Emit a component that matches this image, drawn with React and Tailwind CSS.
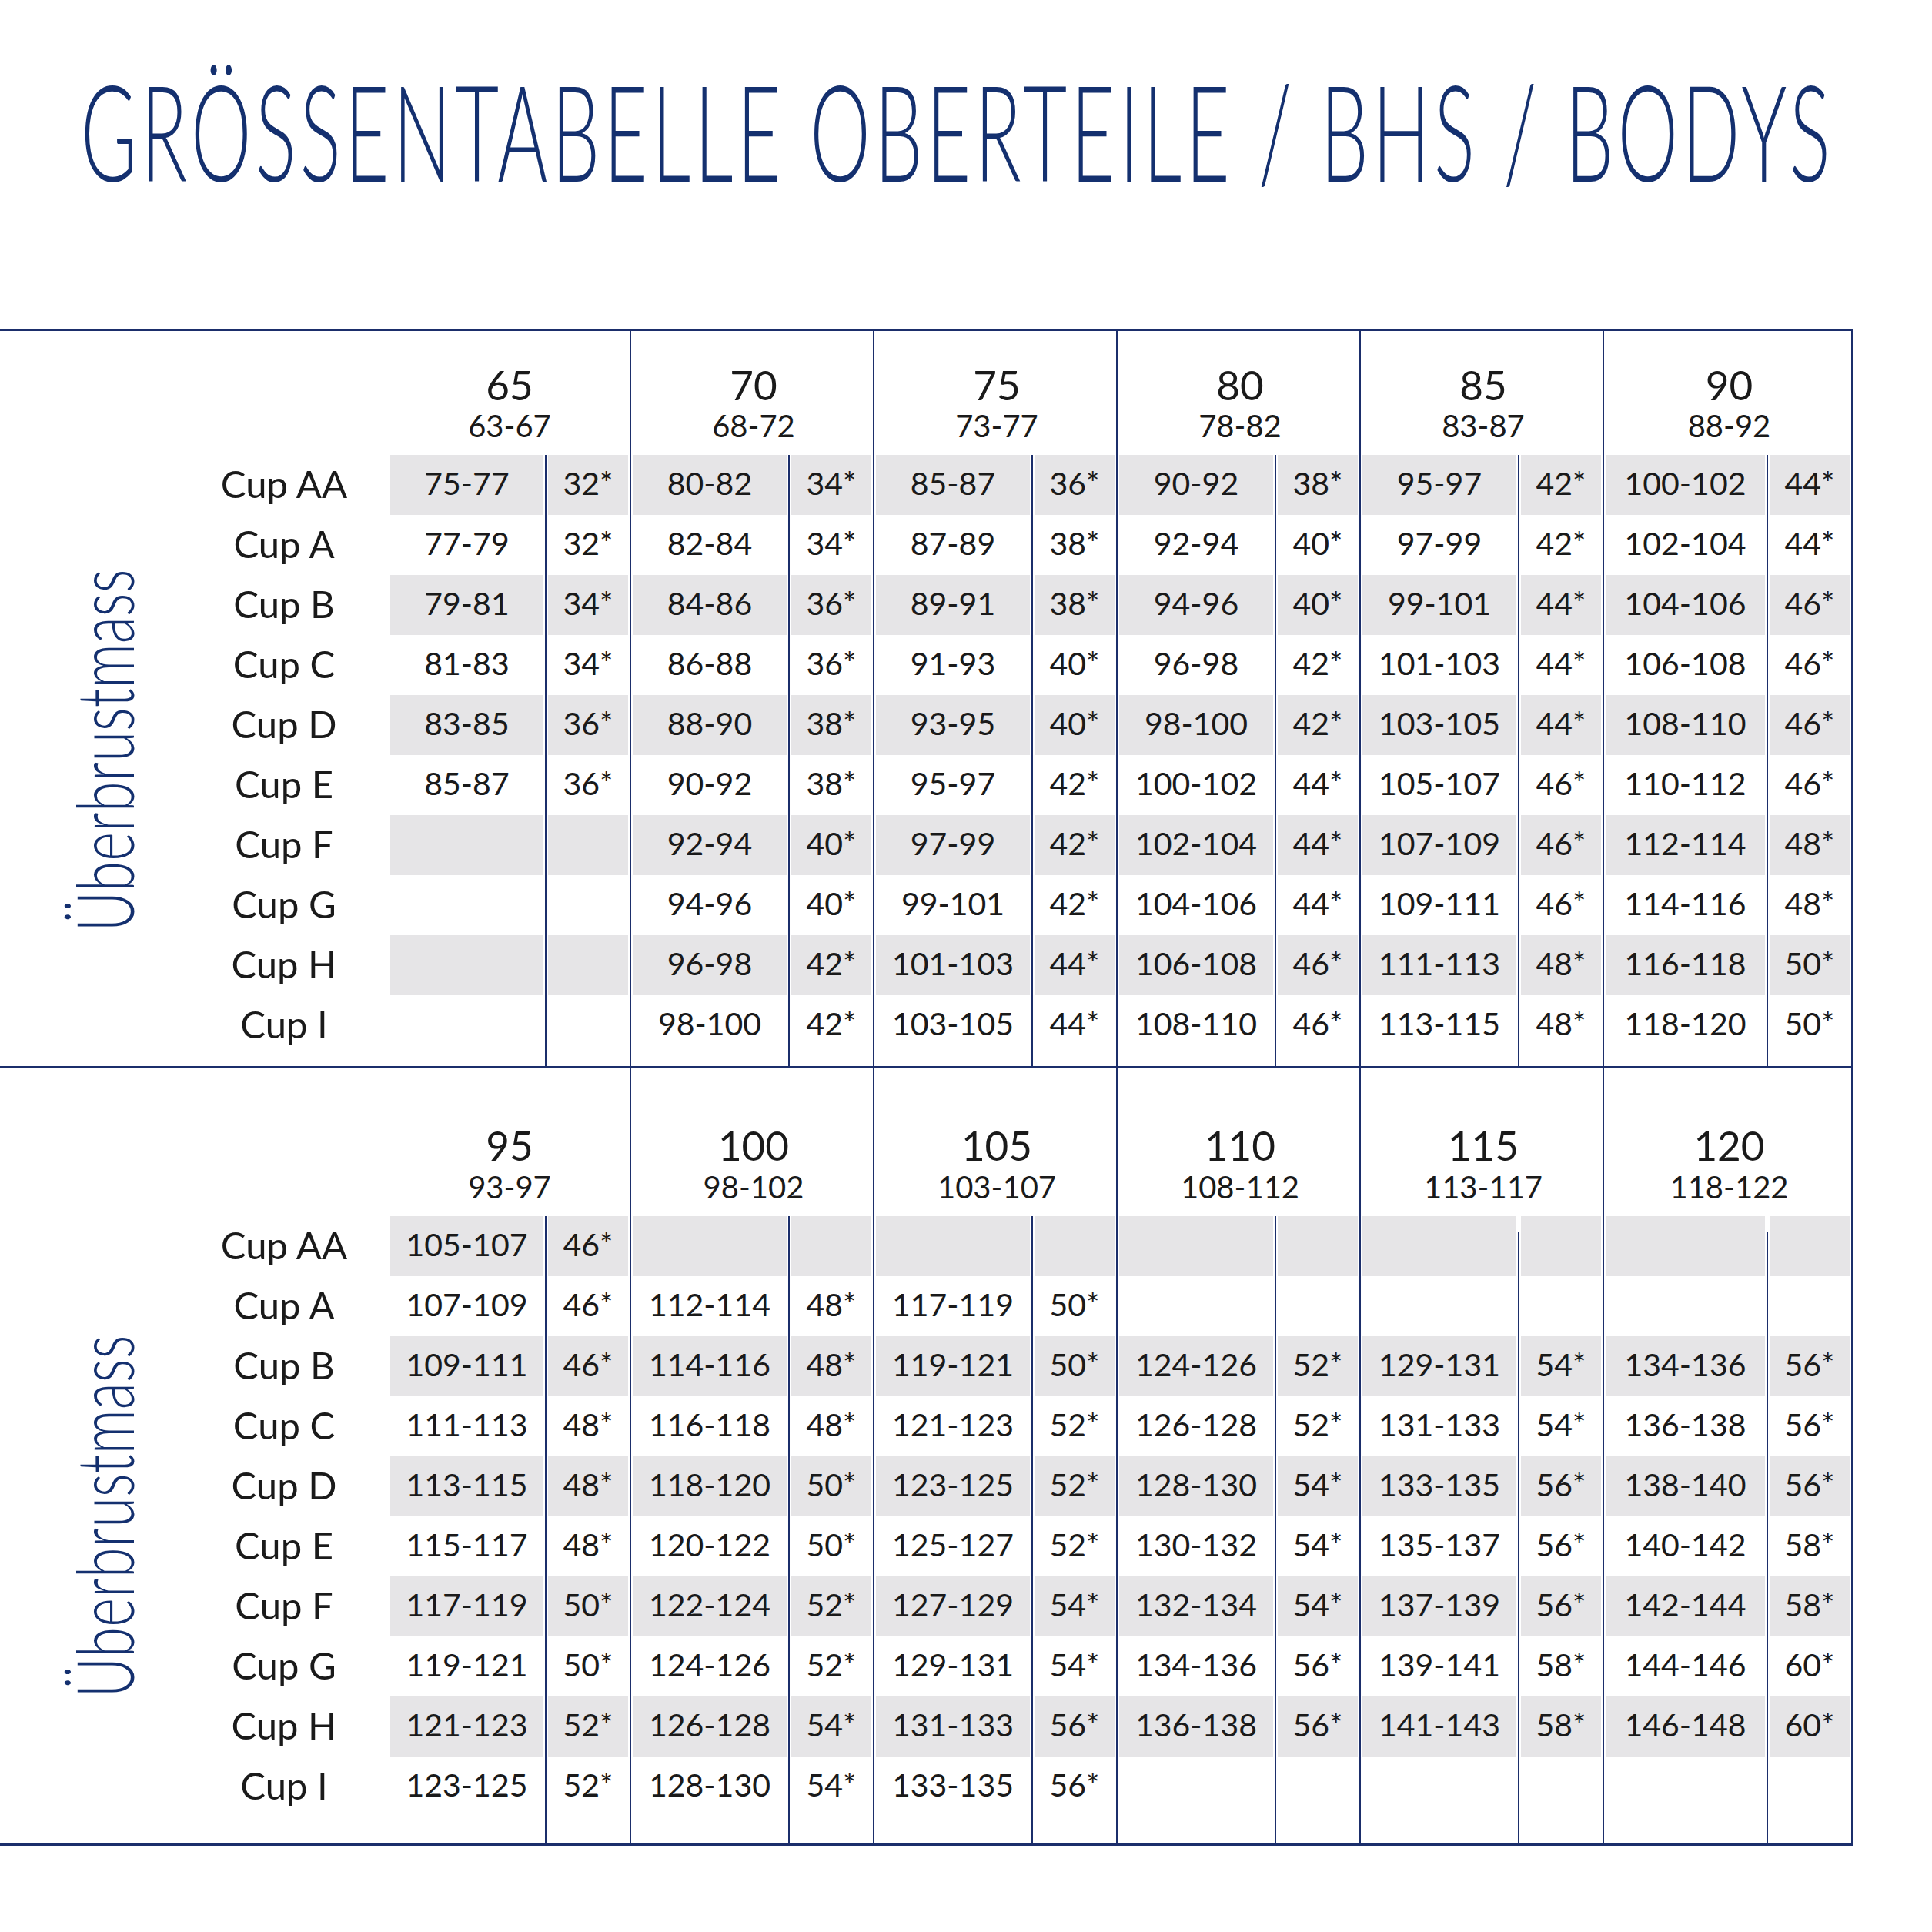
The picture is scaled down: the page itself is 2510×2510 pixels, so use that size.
import React from 'react';

const cups = ['Cup AA', 'Cup A', 'Cup B', 'Cup C', 'Cup D', 'Cup E', 'Cup F', 'Cup G', 'Cup H', 'Cup I'];

// rows: [range, size] or null for an empty cell
const upper = [
  { size: '65', range: '63-67', rows: [['75-77', '32*'], ['77-79', '32*'], ['79-81', '34*'], ['81-83', '34*'], ['83-85', '36*'], ['85-87', '36*'], null, null, null, null] },
  { size: '70', range: '68-72', rows: [['80-82', '34*'], ['82-84', '34*'], ['84-86', '36*'], ['86-88', '36*'], ['88-90', '38*'], ['90-92', '38*'], ['92-94', '40*'], ['94-96', '40*'], ['96-98', '42*'], ['98-100', '42*']] },
  { size: '75', range: '73-77', rows: [['85-87', '36*'], ['87-89', '38*'], ['89-91', '38*'], ['91-93', '40*'], ['93-95', '40*'], ['95-97', '42*'], ['97-99', '42*'], ['99-101', '42*'], ['101-103', '44*'], ['103-105', '44*']] },
  { size: '80', range: '78-82', rows: [['90-92', '38*'], ['92-94', '40*'], ['94-96', '40*'], ['96-98', '42*'], ['98-100', '42*'], ['100-102', '44*'], ['102-104', '44*'], ['104-106', '44*'], ['106-108', '46*'], ['108-110', '46*']] },
  { size: '85', range: '83-87', rows: [['95-97', '42*'], ['97-99', '42*'], ['99-101', '44*'], ['101-103', '44*'], ['103-105', '44*'], ['105-107', '46*'], ['107-109', '46*'], ['109-111', '46*'], ['111-113', '48*'], ['113-115', '48*']] },
  { size: '90', range: '88-92', rows: [['100-102', '44*'], ['102-104', '44*'], ['104-106', '46*'], ['106-108', '46*'], ['108-110', '46*'], ['110-112', '46*'], ['112-114', '48*'], ['114-116', '48*'], ['116-118', '50*'], ['118-120', '50*']] },
];

const lower = [
  { size: '95', range: '93-97', rows: [['105-107', '46*'], ['107-109', '46*'], ['109-111', '46*'], ['111-113', '48*'], ['113-115', '48*'], ['115-117', '48*'], ['117-119', '50*'], ['119-121', '50*'], ['121-123', '52*'], ['123-125', '52*']] },
  { size: '100', range: '98-102', rows: [null, ['112-114', '48*'], ['114-116', '48*'], ['116-118', '48*'], ['118-120', '50*'], ['120-122', '50*'], ['122-124', '52*'], ['124-126', '52*'], ['126-128', '54*'], ['128-130', '54*']] },
  { size: '105', range: '103-107', rows: [null, ['117-119', '50*'], ['119-121', '50*'], ['121-123', '52*'], ['123-125', '52*'], ['125-127', '52*'], ['127-129', '54*'], ['129-131', '54*'], ['131-133', '56*'], ['133-135', '56*']] },
  { size: '110', range: '108-112', rows: [null, null, ['124-126', '52*'], ['126-128', '52*'], ['128-130', '54*'], ['130-132', '54*'], ['132-134', '54*'], ['134-136', '56*'], ['136-138', '56*'], null] },
  { size: '115', range: '113-117', lowLine: true, rows: [null, null, ['129-131', '54*'], ['131-133', '54*'], ['133-135', '56*'], ['135-137', '56*'], ['137-139', '56*'], ['139-141', '58*'], ['141-143', '58*'], null] },
  { size: '120', range: '118-122', lowLine: true, rows: [null, null, ['134-136', '56*'], ['136-138', '56*'], ['138-140', '56*'], ['140-142', '58*'], ['142-144', '58*'], ['144-146', '60*'], ['146-148', '60*'], null] },
];

function Cell({ text, gray, wide }) {
  return (
    <div className="h-[78px]">
      <div className={`h-full flex items-center justify-center pb-[6px] text-[41px] leading-none text-[#1a1a1a] ${wide ? 'ml-[5px] mr-[2px]' : 'mx-[2px]'} ${gray ? 'bg-[#e6e5e7]' : ''}`}>
        {text}
      </div>
    </div>
  );
}

function Group({ g, index, lower }) {
  const first = index === 0;
  const last = index === 5;
  let outer = 'w-[316px] flex flex-col';
  let valueW = 'w-[204px]';
  if (first) valueW = 'w-[206px]';
  if (!first) outer += ' border-l-2 border-[#1b2e6b]';
  if (last) {
    outer = 'w-[325px] flex flex-col border-x-2 border-[#1b2e6b]';
    valueW = 'w-[211px]';
  }

  return (
    <div className={outer}>
      <div className={`${lower ? 'h-[192px]' : 'h-[161px]'} flex flex-col items-center justify-end pb-[18px] pl-[4px] text-[#1a1a1a]`}>
        <div className="text-[53px] leading-none">{g.size}</div>
        <div className={`text-[40px] leading-none ${lower ? 'mt-[8px]' : 'mt-[7px]'}`}>{g.range}</div>
      </div>
      <div className="flex">
        <div className={`${valueW} flex flex-col ${lower ? 'pb-[35px]' : 'pb-[14px]'}`}>
          {g.rows.map((r, i) => (
            <Cell key={i} text={r ? r[0] : ''} gray={i % 2 === 0} wide={first} />
          ))}
        </div>
        <div className={`w-[2px] bg-[#1b2e6b] ${g.lowLine ? 'mt-[20px]' : ''}`} />
        <div className={`w-[108px] flex flex-col ${lower ? 'pb-[35px]' : 'pb-[14px]'}`}>
          {g.rows.map((r, i) => (
            <Cell key={i} text={r ? r[1] : ''} gray={i % 2 === 0} />
          ))}
        </div>
      </div>
    </div>
  );
}

function Block({ groups, lower }) {
  return (
    <div className={`w-[2407px] flex border-[#1b2e6b] border-b-[3px] ${lower ? '' : 'border-t-[3px]'}`}>
      <div className="w-[502px] flex flex-col">
        <div className={lower ? 'h-[192px]' : 'h-[161px]'} />
        <div className="flex">
          <div className={`w-[236px] h-[780px] pl-[34px] flex items-center justify-center ${lower ? '' : 'pb-[12px]'}`}>
            <span className="shrink-0 whitespace-nowrap -rotate-90 scale-x-[0.71] text-[102px] leading-none font-light text-[#14306f]">
              Überbrustmass
            </span>
          </div>
          <div className="flex-1 flex flex-col">
            {cups.map((c) => (
              <div key={c} className="h-[78px] flex items-center justify-center pb-[4px] text-[49px] leading-none text-[#1a1a1a]">
                {c}
              </div>
            ))}
          </div>
        </div>
      </div>
      {groups.map((g, i) => (
        <Group key={g.size} g={g} index={i} lower={lower} />
      ))}
    </div>
  );
}

export default function App() {
  return (
    <div className="w-[2510px] min-h-[2510px] bg-white pt-[82px] font-['Lato',sans-serif]">
      {/* Title */}
      <div className="h-[174px] pl-[105px]">
        <div className="w-[2200px] origin-left scale-x-[0.57] whitespace-nowrap text-[174px] leading-none font-light tracking-[9px] text-[#14306f]">
          GRÖSSENTABELLE OBERTEILE / BHS / BODYS
        </div>
      </div>

      {/* Tables */}
      <div className="mt-[171px]">
        <Block groups={upper} />
        <Block groups={lower} lower />
      </div>
    </div>
  );
}
